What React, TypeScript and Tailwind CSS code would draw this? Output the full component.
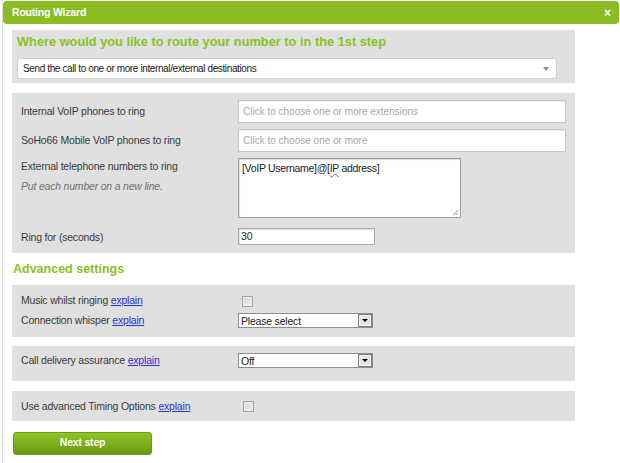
import React from "react";

const Link = ({ children }: { children: React.ReactNode }) => (
  <a className="text-[#2e2ed6] underline underline-offset-[1px]">{children}</a>
);

const Checkbox = () => (
  <div className="w-[11px] h-[11px] border border-[#a3a3a3] bg-[linear-gradient(135deg,#d4d4d4,#f4f4f4)] shadow-[inset_0_0_0_1px_#eeeeee]" />
);

const OldSelect = ({ text }: { text: string }) => (
  <div className="w-[135px] h-[15px] border border-[#8f8f8f] bg-white flex">
    <span className="flex-1 pl-[2px] text-[10.5px] leading-[14px] tracking-[-0.2px] text-[#222]">{text}</span>
    <span className="w-[14px] h-full border border-[#7a7a7a] bg-[#e4e4e4] shadow-[inset_0_0_0_1px_#f6f6f6] flex items-center justify-center">
      <span className="w-0 h-0 border-l-[3px] border-r-[3px] border-t-[3px] border-l-transparent border-r-transparent border-t-black" />
    </span>
  </div>
);

export default function App() {
  return (
    <div className="w-[620px] h-[463px] bg-white overflow-hidden font-['Liberation_Sans',Arial,sans-serif] text-[#3a3a3a]">
      <div className="ml-[2px] h-full border-l border-[#dcdcdc] pt-px">
        {/* Header */}
        <div className="mr-px h-[23px] rounded-[4px] bg-[#8bbd22] flex items-center justify-between pl-[9px] pr-[8px]">
          <span className="text-white font-bold text-[10.5px] tracking-[-0.2px]">Routing Wizard</span>
          <span className="text-white font-bold text-[12px] leading-none">×</span>
        </div>

        <div className="pl-[9px]">
          {/* Panel 1 */}
          <div className="mt-[6px] w-[563px] bg-[#e0e0e0] px-[5px] pt-[4px] pb-[4px]">
            <div className="text-[12.8px] leading-[16px] font-bold text-[#8cc021]">
              Where would you like to route your number to in the 1st step
            </div>
            <div className="mt-[8px] w-[540px] h-[21px] rounded-[3px] border border-[#cfcfcf] bg-white flex items-center justify-between pl-[5px] pr-[7px]">
              <span className="text-[10px] tracking-[-0.38px] text-[#222]">
                Send the call to one or more internal/external destinations
              </span>
              <span className="w-0 h-0 border-l-[3px] border-r-[3px] border-t-[4px] border-l-transparent border-r-transparent border-t-[#888]" />
            </div>
          </div>

          {/* Panel 2 */}
          <div className="mt-[10px] w-[563px] bg-[#e0e0e0] pt-[7px] pb-[8px] text-[10.5px] tracking-[-0.2px]">
            <div className="flex">
              <div className="w-[226px] pl-[9px] pt-[4px] leading-[14px]">Internal VoIP phones to ring</div>
              <div className="w-[328px] h-[23px] border border-[#c6c6c6] bg-white shadow-[inset_0_1px_1px_rgba(0,0,0,0.08)] flex items-center pl-[4px] text-[10px] tracking-normal text-[#a8a8a8]">
                Click to choose one or more extensions
              </div>
            </div>
            <div className="flex mt-[6px]">
              <div className="w-[226px] pl-[9px] pt-[4px] leading-[14px]">SoHo66 Mobile VoIP phones to ring</div>
              <div className="w-[328px] h-[23px] border border-[#c6c6c6] bg-white shadow-[inset_0_1px_1px_rgba(0,0,0,0.08)] flex items-center pl-[4px] text-[10px] tracking-normal text-[#a8a8a8]">
                Click to choose one or more
              </div>
            </div>
            <div className="flex mt-[6px]">
              <div className="w-[226px] pl-[9px] pt-[1px] leading-[14px]">
                <div>External telephone numbers to ring</div>
                <div className="mt-[6px] italic text-[#707070]">Put each number on a new line.</div>
              </div>
              <div className="relative w-[223px] h-[60px] border border-[#9e9e9e] bg-white shadow-[inset_1px_1px_1px_rgba(0,0,0,0.15)] pl-[3px] pt-[2px] leading-[14px] tracking-[-0.3px] text-[#222]">
                [VoIP Username]@[<span className="underline decoration-wavy decoration-[#e04040] decoration-[1px]">IP</span> address]
                <svg className="absolute right-[1px] bottom-[1px]" width="7" height="7" viewBox="0 0 7 7">
                  <path d="M6 1L1 6M6 3.5L3.5 6" stroke="#9a9a9a" strokeWidth="1" />
                </svg>
              </div>
            </div>
            <div className="flex items-center mt-[10px]">
              <div className="w-[226px] pl-[9px] leading-[14px]">Ring for (seconds)</div>
              <div className="w-[137px] h-[17px] border border-[#a9a9a9] bg-white shadow-[inset_1px_1px_1px_rgba(0,0,0,0.12)] flex items-center pl-[2px] text-[#222]">
                30
              </div>
            </div>
          </div>

          {/* Advanced settings */}
          <div className="mt-[8px] ml-[1px] text-[12.5px] leading-[16px] font-bold text-[#8cc021]">Advanced settings</div>

          <div className="mt-[8px] w-[563px] bg-[#e0e0e0] pt-[10px] pb-[8px] text-[10.5px] tracking-[-0.2px]">
            <div className="flex items-center h-[12px]">
              <div className="w-[226px] pl-[9px]">Music whilst ringing <Link>explain</Link></div>
              <div className="ml-[4px]"><Checkbox /></div>
            </div>
            <div className="flex items-center mt-[6px]">
              <div className="w-[226px] pl-[9px]">Connection whisper <Link>explain</Link></div>
              <OldSelect text="Please select" />
            </div>
          </div>

          <div className="mt-[9px] w-[563px] bg-[#e0e0e0] pt-[7px] pb-[12px] text-[10.5px] tracking-[-0.2px]">
            <div className="flex items-center">
              <div className="w-[226px] pl-[9px]">Call delivery assurance <Link>explain</Link></div>
              <OldSelect text="Off" />
            </div>
          </div>

          <div className="mt-[10px] w-[563px] bg-[#e0e0e0] pt-[10px] pb-[8px] text-[10.5px] tracking-[-0.2px]">
            <div className="flex items-center h-[12px]">
              <div className="w-[226px] pl-[9px]">Use advanced Timing Options <Link>explain</Link></div>
              <div className="ml-[5px]"><Checkbox /></div>
            </div>
          </div>

          <button className="mt-[11px] ml-[1px] w-[139px] h-[23px] rounded-[3px] border border-[#6e9a18] bg-[linear-gradient(#90c424,#6a9914)] text-white font-bold text-[10.5px] tracking-[-0.2px] flex items-center justify-center">
            Next step
          </button>
        </div>
      </div>
    </div>
  );
}
